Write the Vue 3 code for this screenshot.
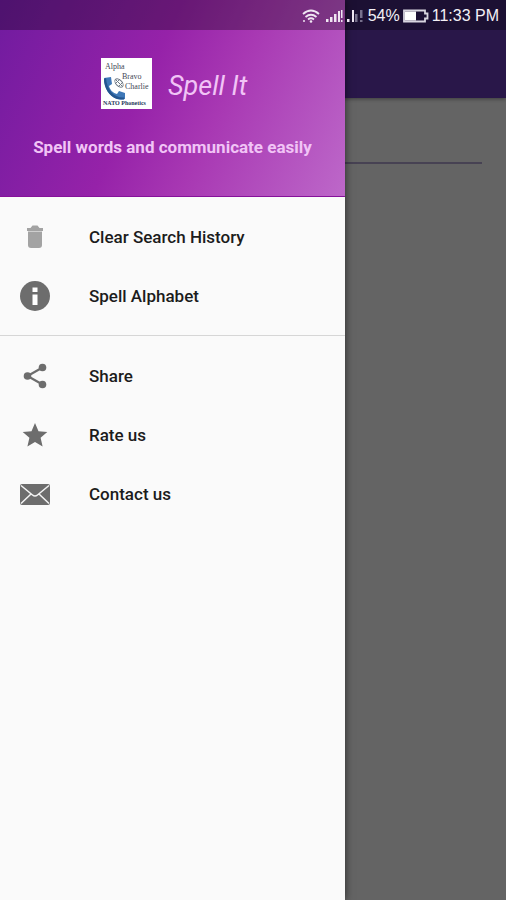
<script setup>
import { ref } from 'vue'

const query = ref('')
const groups = [
  [
    { label: 'Clear Search History', icon: 'trash' },
    { label: 'Spell Alphabet', icon: 'info' },
  ],
  [
    { label: 'Share', icon: 'share' },
    { label: 'Rate us', icon: 'star' },
    { label: 'Contact us', icon: 'mail' },
  ],
]
</script>

<template>
  <div class="screen">
    <main class="page">
      <div class="toolbar"></div>
      <div class="search">
        <input v-model="query" class="search-input" type="text" aria-label="Search" />
      </div>
    </main>
    <div class="scrim"></div>

    <aside class="drawer">
      <header class="head">
        <div class="brand">
          <svg class="logo" viewBox="0 0 51 51" aria-hidden="true">
            <rect width="51" height="51" fill="#fff" />
            <g font-family="Liberation Serif, serif" font-size="8" fill="#3f4855">
              <text x="4" y="11">Alpha</text>
              <text x="21" y="21">Bravo</text>
              <text x="24" y="31">Charlie</text>
            </g>
            <path d="M3 20l7-1 1 7-3 2c1 4 4 7 8 8l2-3 6 2v6c-3 1-5 1-8 0C8 38 3 30 3 20z" fill="#3f78b8" />
            <path d="M3 21c0 9 5 17 13 20l7 .5v-2C13 40 6 32 5 20z" fill="#24558f" />
            <g fill="none" stroke="#707a86" stroke-width="1">
              <ellipse cx="18" cy="25" rx="3" ry="5" transform="rotate(-45 18 25)" />
              <path d="M15 22l6 6M14 26l5-5M17 29l5-5" />
            </g>
            <text x="2" y="47" font-family="Liberation Serif, serif" font-size="6" font-weight="bold" fill="#25375a">NATO Phonetics</text>
          </svg>
          <h1 class="title">Spell It</h1>
        </div>
        <p class="tagline">Spell words and communicate easily</p>
      </header>

      <nav>
        <ul v-for="(group, i) in groups" :key="i" class="group">
          <li v-for="item in group" :key="item.label">
            <button class="item" type="button">
              <svg class="icon" viewBox="0 0 30 30" aria-hidden="true">
                <g v-if="item.icon === 'trash'" fill="#a3a3a3">
                  <path d="M7 6h3.500L12.500 3.500h5L19.500 6H23V9H7z" />
                  <path d="M8 9.500h14V23q0 3-3 3h-8q-3 0-3-3z" />
                </g>
                <g v-else-if="item.icon === 'info'">
                  <circle cx="15" cy="15" r="15" fill="#6d6d6d" />
                  <path d="M12.500 6.500h5v4.500h-5zM12.500 13.500h5V24h-5z" fill="#fff" />
                </g>
                <g v-else-if="item.icon === 'share'" fill="#6d6d6d">
                  <path d="M22.500 6.500L7.500 15l15 8.500" fill="none" stroke="#6d6d6d" stroke-width="2.200" />
                  <circle cx="22.500" cy="6.500" r="3.800" />
                  <circle cx="7.500" cy="15" r="3.800" />
                  <circle cx="22.500" cy="23.500" r="3.800" />
                </g>
                <path
                  v-else-if="item.icon === 'star'"
                  d="M15 3l3.500 8.200 8.800.8-6.700 5.800 2 8.700L15 21.900l-7.600 4.600 2-8.700L2.700 12l8.800-.8z"
                  fill="#6d6d6d"
                />
                <g v-else>
                  <rect y="5" width="30" height="21" rx="2" fill="#6d6d6d" />
                  <path d="M1 6.500l11.500 9.500q2.500 2 5 0L29 6.500M1 24.500l10-9.500M29 24.500l-10-9.500" fill="none" stroke="#f4f4f4" stroke-width="1.500" />
                </g>
              </svg>
              <span>{{ item.label }}</span>
            </button>
          </li>
        </ul>
      </nav>
    </aside>

    <div class="status">
      <svg class="wifi" viewBox="0 0 18 14" aria-hidden="true">
        <g fill="none" stroke="#efe6f2" stroke-width="1.800">
          <path d="M1 5q8-7 16 0M3.500 8q5.500-4.500 11 0M6 10.500q3-2.500 6 0" />
        </g>
        <circle cx="9" cy="12.500" r="1.300" fill="#efe6f2" />
        <circle cx="2" cy="12" r="1" fill="#efe6f2" />
      </svg>
      <svg class="signal" viewBox="0 0 17 14" aria-hidden="true">
        <path d="M0 10h2.500v3H0zM4 8h2.500v5H4zM8 5h2.500v8H8zM12 2h2v11h-2zM15 1h1.500v8H15zM15 11h1.500v2H15z" fill="#efe6f2" />
      </svg>
      <svg class="signal" viewBox="0 0 17 14" aria-hidden="true">
        <path d="M0 10h2.500v3H0zM5 1h2v12H5z" fill="#efe6f2" />
        <path d="M8 5h2.500v8H8zM13 1h2.500v8H13zM13 11h2.500v2H13z" fill="#77708c" />
      </svg>
      <span>54%</span>
      <svg class="battery" viewBox="0 0 26 14" aria-hidden="true">
        <path d="M1 1.500h21v3h2.500v5H22v3H1z" fill="none" stroke="#d8d5df" stroke-width="1.800" />
        <path d="M2 2.500h11v9H2z" fill="#fff" />
      </svg>
      <span>11:33 PM</span>
    </div>
  </div>
</template>

<style>
body {
  margin: 0;
}
</style>

<style scoped>
.screen {
  display: grid;
  grid-template-rows: 30px 1fr;
  min-height: 100vh;
  overflow: hidden;
  font-family: Roboto, sans-serif;
}
.page,
.scrim,
.drawer {
  grid-area: 1 / 1 / 3 / 2;
}
.page {
  background: #fafafa;
}
.toolbar {
  height: 98px;
  background: #673ab7;
  box-shadow: 0 1px 4px rgba(0, 0, 0, 0.4);
}
.search {
  padding: 30px 24px;
}
.search-input {
  display: block;
  box-sizing: border-box;
  width: 100%;
  height: 36px;
  padding: 0;
  border: 0;
  border-bottom: 2px solid #b1a6d0;
  outline: 0;
  background: transparent;
  font: inherit;
}
.scrim {
  background: rgba(0, 0, 0, 0.6);
}
.drawer {
  width: calc(100% - 161px);
  background: #fafafa;
  box-shadow: 0 0 8px rgba(0, 0, 0, 0.6);
}
.head {
  box-sizing: border-box;
  height: 197px;
  padding-top: 58px;
  border-bottom: 1px solid #86119a;
  background: linear-gradient(115deg, #701b9f 0%, #9622a9 42%, #a838b3 62%, #bd68c9 100%);
  color: #f1c4f6;
}
.brand {
  display: flex;
  align-items: center;
  gap: 16px;
  padding-left: 101px;
}
.logo {
  width: 51px;
  height: 51px;
}
.title {
  margin: 0;
  padding-top: 4px;
  font-size: 27px;
  font-weight: 400;
  font-style: italic;
  line-height: 32px;
}
.tagline {
  margin: 26px 0 0;
  font-size: 17px;
  font-weight: 700;
  line-height: 24px;
  text-align: center;
}
.group {
  margin: 0;
  padding: 10px 0;
  list-style: none;
}
.group + .group {
  border-top: 1px solid #d6d6d6;
}
.item {
  display: flex;
  align-items: center;
  gap: 39px;
  width: 100%;
  height: 59px;
  padding: 0 20px;
  border: 0;
  background: transparent;
  color: #1c1c1c;
  font-family: inherit;
  font-size: 17px;
  font-weight: 500;
  line-height: 24px;
  text-align: left;
  cursor: pointer;
}
.icon {
  flex: none;
  width: 30px;
  height: 30px;
}
.status {
  grid-area: 1 / 1 / 2 / 2;
  z-index: 1;
  display: flex;
  align-items: center;
  justify-content: flex-end;
  padding: 2px 7px 0;
  background: rgba(0, 0, 0, 0.3);
  color: #f3f0f6;
  font-family: "Liberation Sans", sans-serif;
  font-size: 16px;
  line-height: 24px;
}
.wifi {
  width: 18px;
  height: 14px;
  margin-right: 6px;
}
.signal {
  width: 17px;
  height: 14px;
  margin-right: 4px;
}
.battery {
  width: 26px;
  height: 14px;
  margin: 0 3px;
}
</style>
